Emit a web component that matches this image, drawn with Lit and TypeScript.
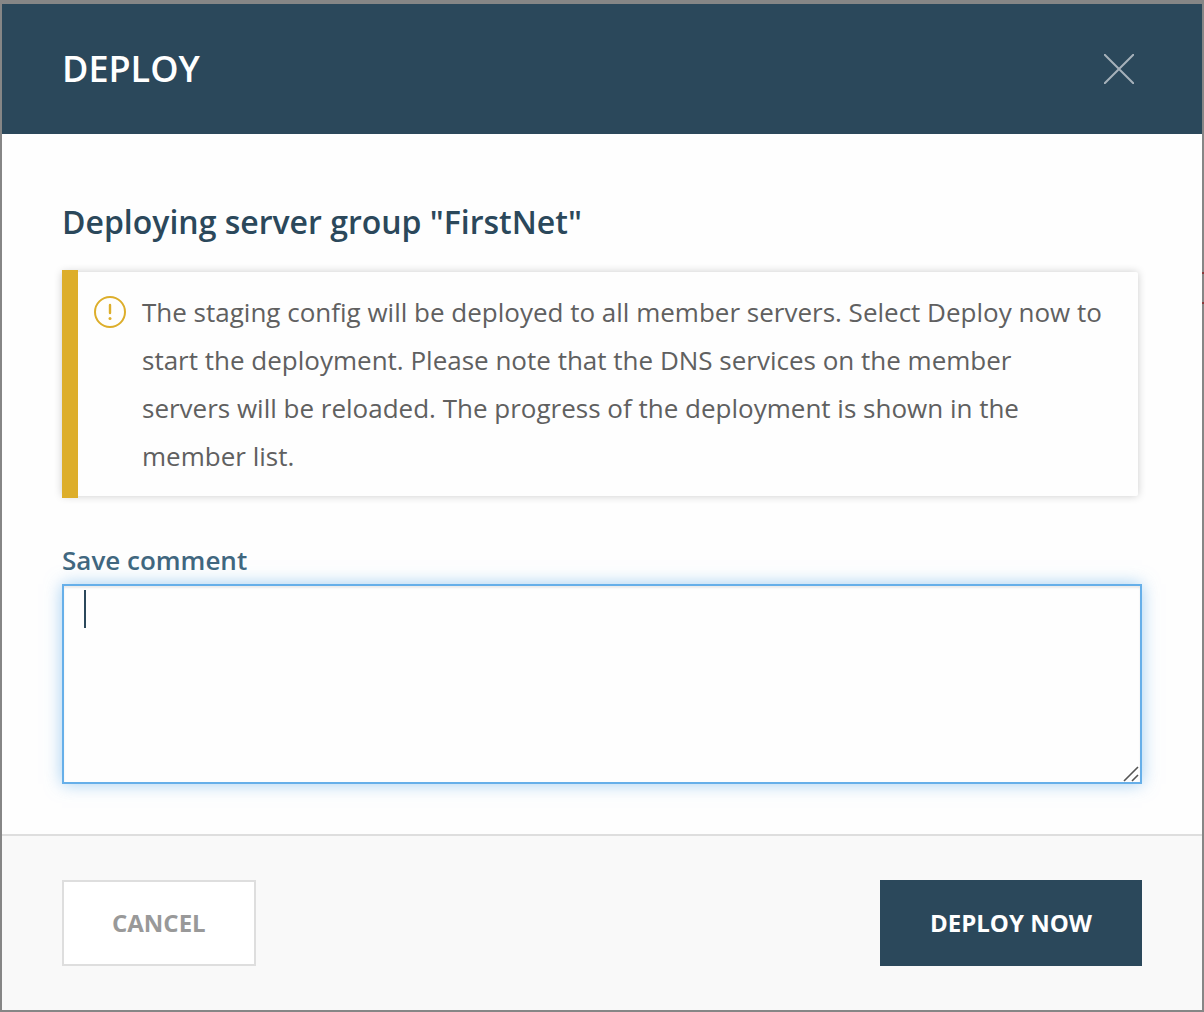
import { LitElement, html, css } from "lit";
import { customElement, state } from "lit/decorators.js";

@customElement("app-root")
export class AppRoot extends LitElement {
  static styles = css`
    :host {
      display: block;
      font-family: "Open Sans", "Noto Sans", sans-serif;
      --navy: #2b485b;
    }
    * {
      box-sizing: border-box;
    }
    .backdrop {
      min-height: 100vh;
      padding: 4px 2px 2px;
      background: linear-gradient(#8a3a3c, #8a3a3c) right 272px / 2px 2px no-repeat,
        linear-gradient(#8a3a3c, #8a3a3c) right 302px / 2px 2px no-repeat, #868686;
      display: flex;
    }
    .dialog {
      flex: 1;
      display: flex;
      flex-direction: column;
      background: #fefefe;
    }
    .header {
      display: flex;
      align-items: center;
      justify-content: space-between;
      height: 130px;
      padding: 0 60px;
      background: var(--navy);
      color: #fff;
    }
    .title {
      margin: 0;
      font-size: 36px;
      line-height: 48px;
      font-weight: 600;
    }
    .close {
      display: flex;
      padding: 8px;
      border: 0;
      background: none;
      color: #a6b1ba;
      cursor: pointer;
    }
    .body {
      flex: 1;
      padding: 64px 60px 50px;
    }
    .heading {
      margin: 0 0 24px;
      font-size: 32px;
      line-height: 48px;
      font-weight: 600;
      color: var(--navy);
    }
    .alert {
      position: relative;
      margin-right: 4px;
      padding: 2px 0;
    }
    .alert::before {
      content: "";
      position: absolute;
      inset: 0 auto 0 0;
      width: 16px;
      background: #ddae2b;
    }
    .panel {
      display: flex;
      gap: 16px;
      padding: 16px 34px 16px 32px;
      border-radius: 2px;
      background: #fefefe;
      box-shadow: 0 0 8px rgba(0, 0, 0, 0.2);
    }
    .alert-icon {
      flex: none;
      margin-top: 8px;
    }
    .message {
      margin: 0;
      font-size: 26px;
      line-height: 48px;
      color: #606060;
    }
    .label {
      display: block;
      margin-top: 44px;
      font-size: 26px;
      line-height: 36px;
      font-weight: 600;
      color: #41677f;
    }
    .field {
      position: relative;
      display: flex;
      margin-top: 6px;
    }
    .comment {
      width: 100%;
      height: 200px;
      padding: 4px 20px;
      border: 2px solid #66afe9;
      border-radius: 0;
      outline: 0;
      background: #fefefe;
      box-shadow: inset 0 2px 2px rgba(0, 0, 0, 0.08),
        0 0 16px rgba(102, 175, 233, 0.6);
      font: inherit;
      font-size: 26px;
      line-height: 38px;
      color: var(--navy);
      resize: vertical;
    }
    .comment::-webkit-resizer {
      background: transparent;
    }
    .caret {
      position: absolute;
      left: 22px;
      top: 6px;
      width: 2px;
      height: 38px;
      background: var(--navy);
      pointer-events: none;
    }
    .grip {
      position: absolute;
      right: 3px;
      bottom: 2px;
      pointer-events: none;
    }
    .footer {
      display: flex;
      justify-content: space-between;
      padding: 44px 60px;
      border-top: 2px solid #dedede;
      background: #f9f9f9;
    }
    .button {
      height: 86px;
      padding: 0 48px 2px;
      border: 2px solid #dedede;
      background: #fff;
      color: #999;
      font: inherit;
      font-size: 24px;
      font-weight: 700;
      cursor: pointer;
    }
    .primary {
      border-color: var(--navy);
      background: var(--navy);
      color: #fff;
    }
  `;

  @state() private comment = "";

  private onInput(e: Event) {
    this.comment = (e.target as HTMLTextAreaElement).value;
  }

  render() {
    return html`
      <div class="backdrop">
        <section class="dialog" role="dialog" aria-labelledby="title">
          <header class="header">
            <h1 class="title" id="title">DEPLOY</h1>
            <button class="close" type="button" aria-label="Close">
              <svg width="30" height="30" viewBox="0 0 30 30" fill="none" stroke="currentColor" stroke-width="2">
                <path d="M0 0 30 30M30 0 0 30" />
              </svg>
            </button>
          </header>
          <div class="body">
            <h2 class="heading">Deploying server group "FirstNet"</h2>
            <div class="alert">
              <div class="panel">
                <svg class="alert-icon" width="32" height="32" viewBox="0 0 32 32" fill="none" stroke="#ddae2b">
                  <circle cx="16" cy="16" r="15" stroke-width="2" />
                  <path d="M16 9v8" stroke-width="2.4" stroke-linecap="round" />
                  <circle cx="16" cy="22.5" r="1.5" fill="#ddae2b" stroke="none" />
                </svg>
                <p class="message">
                  The staging config will be deployed to all member servers. Select Deploy now to start the
                  deployment. Please note that the DNS services on the member servers will be reloaded. The
                  progress of the deployment is shown in the member list.
                </p>
              </div>
            </div>
            <label class="label" for="comment">Save comment</label>
            <div class="field">
              <textarea class="comment" id="comment" .value=${this.comment} @input=${this.onInput}></textarea>
              ${this.comment ? "" : html`<span class="caret"></span>`}
              <svg class="grip" width="16" height="16" viewBox="0 0 16 16" fill="none" stroke="#555" stroke-width="1.6">
                <path d="M1 15 15 1M9 15l6-6" />
              </svg>
            </div>
          </div>
          <footer class="footer">
            <button class="button" type="button">CANCEL</button>
            <button class="button primary" type="button">DEPLOY NOW</button>
          </footer>
        </section>
      </div>
    `;
  }
}
